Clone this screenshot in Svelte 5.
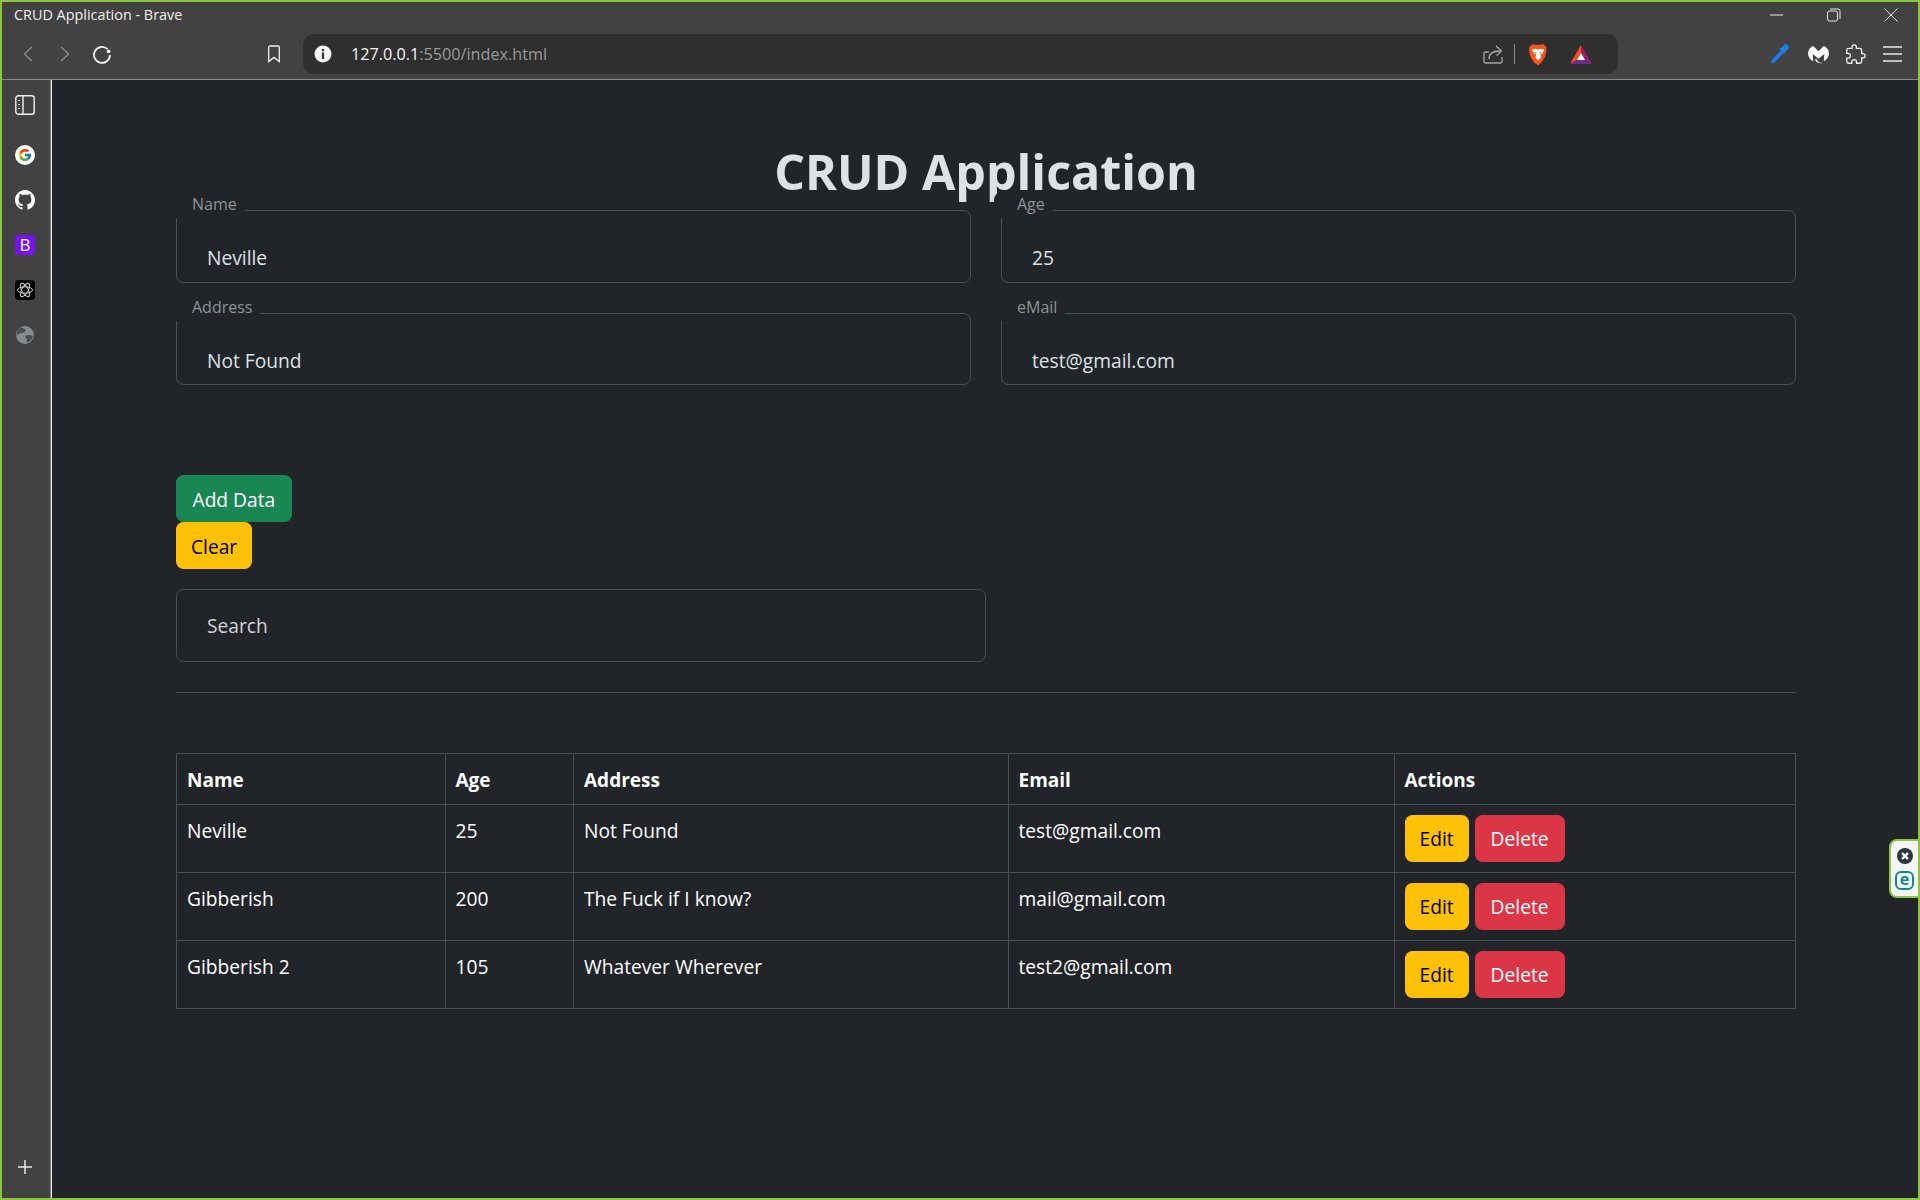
<script>
  let form = $state({ name: 'Neville', age: '25', address: 'Not Found', email: 'test@gmail.com' });
  let search = $state('');
  let rows = $state([
    { name: 'Neville', age: '25', address: 'Not Found', email: 'test@gmail.com' },
    { name: 'Gibberish', age: '200', address: 'The Fuck if I know?', email: 'mail@gmail.com' },
    { name: 'Gibberish 2', age: '105', address: 'Whatever Wherever', email: 'test2@gmail.com' }
  ]);

  function addRow() {
    rows.push({ ...form });
  }

  function clearForm() {
    form = { name: '', age: '', address: '', email: '' };
  }

  function removeRow(index) {
    rows.splice(index, 1);
  }
</script>

<div class="window">
  <header class="titlebar">
    <span class="title">CRUD Application - Brave</span>
    <div class="win-controls">
      <svg viewBox="0 0 14 14" width="14" height="14"><path d="M0 7h13" stroke="#e8e8e8" fill="none" /></svg>
      <svg viewBox="0 0 14 14" width="14" height="14" fill="none" stroke="#e8e8e8"><rect x="0.5" y="3" width="10" height="10" rx="2" /><path d="M3 1h8a2 2 0 0 1 2 2v8" /></svg>
      <svg viewBox="0 0 14 14" width="14" height="14"><path d="M0.5 0.5l13 13M13.5 0.5l-13 13" stroke="#e8e8e8" fill="none" /></svg>
    </div>
  </header>

  <nav class="toolbar">
    <button class="tool" aria-label="Back">
      <svg viewBox="0 0 10 16" width="10" height="16"><path d="M9 1L1.5 8 9 15" stroke="#8b8b8b" stroke-width="1.4" fill="none" /></svg>
    </button>
    <button class="tool" aria-label="Forward">
      <svg viewBox="0 0 10 16" width="10" height="16"><path d="M1 1l7.5 7L1 15" stroke="#8b8b8b" stroke-width="1.4" fill="none" /></svg>
    </button>
    <button class="tool" aria-label="Reload">
      <svg viewBox="0 0 20 20" width="20" height="20"><path d="M15.6 5.2A8 8 0 1 0 18 11" stroke="#f2f2f2" stroke-width="1.8" fill="none" /><circle cx="16.6" cy="7.4" r="1.9" fill="#f2f2f2" /></svg>
    </button>
    <button class="tool bookmark" aria-label="Bookmark">
      <svg viewBox="0 0 14 18" width="14" height="18"><path d="M1.7 16.6V2.4a1.4 1.4 0 0 1 1.4-1.4h7.8a1.4 1.4 0 0 1 1.4 1.4v14.2L7 12.4z" stroke="#f0f0f0" stroke-width="1.3" fill="none" /></svg>
    </button>

    <div class="address">
      <svg class="info" viewBox="0 0 18 18" width="18" height="18"><circle cx="9" cy="9" r="8.5" fill="#f5f5f5" /><path d="M7.9 4h2.2v2.2H7.9zM7.9 7.6h2.2V14H7.9z" fill="#333" /></svg>
      <span class="url"><b>127.0.0.1</b>:5500/index.html</span>
      <svg class="share" viewBox="0 0 20 19" width="20" height="19" fill="none" stroke="#a8a8a8" stroke-width="1.3"><path d="M6 7H2.5A1.5 1.5 0 0 0 1 8.500V16.500A1.500 1.500 0 0 0 2.500 18H17.500A1.500 1.500 0 0 0 19 16.500V12" /><path d="M6 14c0-5 3-8 11-8" /><path d="M13 1l5.500 5-5 4.500" /></svg>
      <span class="sep"></span>
      <svg class="brave" viewBox="0 0 20 23" width="20" height="23"><path d="M5 1l2 .8h6l2-.8 3.500 3.300-.5 1.200.6 1.700-1.400 6.300-3.700 6L10 22.500 6 19.500l-3.700-6L.9 7.200l.6-1.700-.5-1.200z" fill="#f7541e" /><path d="M4 6.500l3.500-.8L10 6.500l2.500-.8 3.500.8-1.500 4-2.200 1 .7 3L10 17.500l-2.500-3 .7-3-2.200-1z" fill="#fff" /><path d="M6.500 8.800l2.500.8-1.800.8zM13.500 8.800l-2.500.8 1.800.8z" fill="#f7541e" /></svg>
      <svg class="bat" viewBox="0 0 22 19" width="22" height="19"><path d="M11 0L0 19l7-4 4-7z" fill="#ff4a1f" /><path d="M11 0l11 19-7-4-4-7z" fill="#9c1f66" /><path d="M0 19h22l-7-4H7z" fill="#662d91" /><path d="M11 8l-4 7h8z" fill="#fff" /></svg>
    </div>

    <button class="tool dropper" aria-label="Color picker">
      <svg viewBox="0 0 20 20" width="20" height="20"><path d="M1 19.500l1-4L11 6.500l2.500 2.500L4.500 18.500z" fill="#1a7fe6" /><path d="M9 4.500l2-.4 3-3.200a2.200 2.200 0 0 1 3.200 0l1 1a2.200 2.200 0 0 1 0 3.200l-3.200 3-.4 2z" fill="#1a7fe6" /></svg>
    </button>
    <button class="tool malware" aria-label="Malwarebytes">
      <svg viewBox="0 0 20 18" width="21" height="19" fill="#f6f6f6"><path d="M5 .8C2 2 0 5 0 8c0 3 2 6 5 7.500L4.500 8.500 10 13l5.500-4.500-.5 7C18 14 20 11 20 8c0-3-2-6-5-7.200L10 6z" /><path d="M6.500 14c1.500 3 5.500 4 7.500 3-3 0-5-1-6-4z" /></svg>
    </button>
    <button class="tool" aria-label="Extensions">
      <svg viewBox="0 0 24 24" width="21" height="21"><path d="M20.500 11H19V7c0-1.100-.9-2-2-2h-4V3.500C13 2.120 11.880 1 10.500 1S8 2.120 8 3.500V5H4c-1.100 0-1.990.9-1.990 2v3.800H3.500c1.490 0 2.700 1.210 2.700 2.700s-1.210 2.700-2.700 2.700H2V20c0 1.100.9 2 2 2h3.800v-1.500c0-1.490 1.210-2.700 2.700-2.700 1.490 0 2.700 1.210 2.700 2.700V22H17c1.100 0 2-.9 2-2v-4h1.500c1.380 0 2.500-1.120 2.500-2.500S21.880 11 20.500 11z" stroke="#ececec" stroke-width="1.500" fill="none" /></svg>
    </button>
    <button class="tool" aria-label="Menu">
      <svg viewBox="0 0 19 16" width="19" height="16"><path d="M0 1h19M0 8h19M0 15h19" stroke="#e8e8e8" stroke-width="1.400" /></svg>
    </button>
  </nav>

  <div class="content">
    <aside class="sidebar">
      <svg class="panel-icon" viewBox="0 0 20 20" width="20" height="20" fill="none" stroke="#efefef" stroke-width="1.400"><rect x="0.800" y="0.800" width="18.400" height="18.400" rx="2.500" /><path d="M8 1v18" /><path d="M4 5v1M4 9v1M4 13v1" stroke-width="1.600" /></svg>
      <svg viewBox="0 0 20 20" width="20" height="20">
        <circle cx="10" cy="10" r="10" fill="#fff" />
        <g transform="translate(2.800 2.800) scale(0.3)">
          <path fill="#FFC107" d="M43.611,20.083H42V20H24v8h11.303c-1.649,4.657-6.08,8-11.303,8c-6.627,0-12-5.373-12-12c0-6.627,5.373-12,12-12c3.059,0,5.842,1.154,7.961,3.039l5.657-5.657C34.046,6.053,29.268,4,24,4C12.955,4,4,12.955,4,24c0,11.045,8.955,20,20,20c11.045,0,20-8.955,20-20C44,22.659,43.862,21.35,43.611,20.083z" />
          <path fill="#FF3D00" d="M6.306,14.691l6.571,4.819C14.655,15.108,18.961,12,24,12c3.059,0,5.842,1.154,7.961,3.039l5.657-5.657C34.046,6.053,29.268,4,24,4C16.318,4,9.656,8.337,6.306,14.691z" />
          <path fill="#4CAF50" d="M24,44c5.166,0,9.86-1.977,13.409-5.192l-6.19-5.238C29.211,35.091,26.715,36,24,36c-5.202,0-9.619-3.317-11.283-7.946l-6.522,5.025C9.505,39.556,16.227,44,24,44z" />
          <path fill="#1976D2" d="M43.611,20.083H42V20H24v8h11.303c-0.792,2.237-2.231,4.166-4.087,5.571c0.001-0.001,0.002-0.001,0.003-0.002l6.19,5.238C36.971,39.205,44,34,44,24C44,22.659,43.862,21.35,43.611,20.083z" />
        </g>
      </svg>
      <svg viewBox="0 0 16 16" width="20" height="20"><path fill="#fff" d="M8 0C3.580 0 0 3.580 0 8c0 3.540 2.290 6.530 5.470 7.590.4.070.55-.17.55-.38 0-.19-.01-.82-.01-1.490-2.010.37-2.530-.49-2.690-.94-.09-.23-.48-.94-.82-1.130-.28-.15-.68-.52-.01-.53.63-.01 1.080.58 1.230.82.72 1.210 1.870.87 2.330.66.070-.52.28-.87.51-1.070-1.780-.2-3.640-.89-3.640-3.950 0-.87.31-1.590.82-2.150-.08-.2-.36-1.020.08-2.120 0 0 .67-.21 2.200.82.64-.18 1.320-.27 2-.27.68 0 1.360.09 2 .27 1.530-1.040 2.200-.82 2.200-.82.44 1.100.16 1.920.08 2.120.51.56.82 1.270.82 2.150 0 3.070-1.870 3.750-3.650 3.950.29.25.54.73.54 1.480 0 1.070-.01 1.930-.01 2.200 0 .21.15.46.55.38A8.013 8.013 0 0016 8c0-4.420-3.580-8-8-8z" /></svg>
      <span class="bs-icon">B</span>
      <svg viewBox="0 0 20 20" width="20" height="20">
        <rect width="20" height="20" rx="4" fill="#000" />
        <g fill="none" stroke="#dcdcdc" stroke-width="0.900">
          <ellipse cx="10" cy="10" rx="7.500" ry="3.200" />
          <ellipse cx="10" cy="10" rx="7.500" ry="3.200" transform="rotate(60 10 10)" />
          <ellipse cx="10" cy="10" rx="7.500" ry="3.200" transform="rotate(120 10 10)" />
        </g>
      </svg>
      <svg viewBox="0 0 20 20" width="20" height="20">
        <circle cx="10" cy="10" r="9" fill="#858a8e" />
        <path d="M6 2.500c2 1 3.500 1 4.500 2.500S8 8 6.500 8 2.500 9 2 11C1 8 2.500 4 6 2.500zM11 10.500c2-1 5-.5 7 .5-.5 3-3 6-6 6.500-1-1 .5-2.500-.5-4s-1.500-2-.5-3z" fill="#4a4d50" />
      </svg>
      <svg class="plus" viewBox="0 0 14 14" width="14" height="14"><path d="M7 0v14M0 7h14" stroke="#e6e6e6" stroke-width="1.500" /></svg>
    </aside>

    <main class="page">
      <h1>CRUD Application</h1>

      <div class="fields">
        <div class="field">
          <input id="name" bind:value={form.name} />
          <label for="name">Name</label>
        </div>
        <div class="field">
          <input id="age" bind:value={form.age} />
          <label for="age">Age</label>
        </div>
        <div class="field">
          <input id="address" bind:value={form.address} />
          <label for="address">Address</label>
        </div>
        <div class="field">
          <input id="email" bind:value={form.email} />
          <label for="email">eMail</label>
        </div>
      </div>

      <div class="form-actions">
        <button class="btn green" onclick={addRow}>Add Data</button>
        <button class="btn yellow" onclick={clearForm}>Clear</button>
      </div>

      <div class="search">
        <input bind:value={search} placeholder="Search" />
      </div>

      <hr />

      <table>
        <colgroup>
          <col class="c-name" />
          <col class="c-age" />
          <col class="c-address" />
          <col class="c-email" />
          <col />
        </colgroup>
        <thead>
          <tr>
            <th>Name</th>
            <th>Age</th>
            <th>Address</th>
            <th>Email</th>
            <th>Actions</th>
          </tr>
        </thead>
        <tbody>
          {#each rows as row, i}
            <tr>
              <td>{row.name}</td>
              <td>{row.age}</td>
              <td>{row.address}</td>
              <td>{row.email}</td>
              <td>
                <div class="row-actions">
                  <button class="btn yellow">Edit</button>
                  <button class="btn red" onclick={() => removeRow(i)}>Delete</button>
                </div>
              </td>
            </tr>
          {/each}
        </tbody>
      </table>
    </main>
  </div>

  <div class="eset">
    <svg viewBox="0 0 16 16" width="16" height="16"><circle cx="8" cy="8" r="8" fill="#2c3640" /><path d="M5 5l6 6M11 5l-6 6" stroke="#fff" stroke-width="2.400" /></svg>
    <span class="eset-e">e</span>
  </div>
</div>

<style>
  :global(body) {
    background: #212529;
  }

  .window {
    position: relative;
    display: flex;
    flex-direction: column;
    box-sizing: border-box;
    width: 1920px;
    height: 1200px;
    overflow: hidden;
    border: 2px solid #8cc63e;
    background: #424242;
    color: #dee2e6;
    font-family: 'Open Sans', 'Noto Sans', sans-serif;
  }

  .titlebar {
    display: flex;
    flex: none;
    align-items: center;
    justify-content: space-between;
    box-sizing: border-box;
    height: 28px;
    padding: 0 20px 3px 12px;
    color: #f0f0f0;
    font-size: 14.4px;
  }

  .win-controls {
    display: flex;
    gap: 43px;
  }

  .toolbar {
    display: flex;
    flex: none;
    align-items: center;
    gap: 1px;
    box-sizing: border-box;
    height: 50px;
    padding: 0 0 1px 8px;
    border-bottom: 1px solid #8a8a8a;
  }

  .tool {
    display: flex;
    align-items: center;
    justify-content: center;
    width: 36px;
    height: 36px;
    padding: 0;
    border: 0;
    background: none;
  }

  .bookmark {
    margin-left: 135px;
  }

  .dropper {
    margin-left: 143px;
  }

  .malware {
    margin-left: 1px;
  }

  .address {
    display: flex;
    flex: none;
    align-items: center;
    box-sizing: border-box;
    width: 1315px;
    height: 40px;
    margin-left: 10px;
    padding: 0 26px 0 11px;
    border-radius: 11px;
    background: #2f2f2f;
  }

  .url {
    flex: 1;
    margin-left: 19px;
    color: #9a9a9a;
    font-size: 16.2px;
  }

  .url b {
    color: #f5f5f5;
    font-weight: 400;
  }

  .sep {
    width: 1px;
    height: 20px;
    margin: 0 13px 0 11px;
    background: #8a8a8a;
  }

  .bat {
    margin-left: 22px;
  }

  .content {
    display: flex;
    flex: 1;
    min-height: 0;
  }

  .sidebar {
    display: flex;
    flex: none;
    flex-direction: column;
    align-items: center;
    gap: 25px;
    box-sizing: border-box;
    width: 49px;
    padding: 15px 2px 24px 0;
    border-right: 1px solid #7d7d7d;
  }

  .panel-icon {
    margin-bottom: 5px;
  }

  .bs-icon {
    display: block;
    width: 20px;
    height: 20px;
    border-radius: 3px;
    background: #7611f0;
    color: #fff;
    font-size: 17px;
    line-height: 20px;
    text-align: center;
  }

  .plus {
    margin-top: auto;
  }

  .page {
    flex: 1;
    box-sizing: border-box;
    padding: 0 122px 0 124px;
    border-left: 1px solid #efefef;
    background: #212529;
  }

  h1 {
    margin: 61px 0 9px;
    color: #dee2e6;
    font-size: 48.4px;
    font-weight: 700;
    line-height: 60px;
    text-align: center;
  }

  .fields {
    display: grid;
    grid-template-columns: 795px 795px;
    gap: 30px;
  }

  .field,
  .search {
    position: relative;
    box-sizing: border-box;
    height: 72.5px;
    border: 1px solid #495057;
    border-radius: 7.5px;
  }

  .search {
    width: 810px;
    margin-top: 20px;
  }

  input {
    display: block;
    box-sizing: border-box;
    width: 100%;
    height: 100%;
    padding: 31px 30px 8px;
    border: 0;
    outline: 0;
    background: transparent;
    color: #dee2e6;
    font: inherit;
    font-size: 19.2px;
    line-height: 30px;
  }

  .search input {
    padding: 0 30px;
  }

  input::placeholder {
    color: #cfd3d6;
    opacity: 1;
  }

  label {
    position: absolute;
    top: -19px;
    left: -8px;
    padding: 0 8px 2px 23px;
    border-top-left-radius: 8px;
    background: #212529;
    color: #8f9396;
    font-size: 16px;
    line-height: 24px;
  }

  .form-actions {
    display: flex;
    flex-direction: column;
    align-items: flex-start;
    margin-top: 90px;
  }

  .btn {
    box-sizing: border-box;
    height: 47px;
    padding: 2px 15px 0;
    border: 0;
    border-radius: 7.5px;
    font: inherit;
    font-size: 19.2px;
    line-height: 30px;
  }

  .green {
    padding-right: 16.5px;
    padding-left: 16.5px;
    background: #198754;
    color: #fff;
  }

  .yellow {
    background: #ffc107;
    color: #000;
  }

  .red {
    padding-right: 16px;
    padding-left: 16px;
    background: #dc3545;
    color: #fff;
  }

  hr {
    height: 1px;
    margin: 30px 0 60px;
    border: 0;
    background: #495057;
  }

  table {
    width: 1620px;
    border-collapse: collapse;
    table-layout: fixed;
    color: #fff;
    font-size: 19.2px;
    line-height: 30px;
  }

  .c-name {
    width: 268.5px;
  }

  .c-age {
    width: 128.5px;
  }

  .c-address {
    width: 434.5px;
  }

  .c-email {
    width: 386px;
  }

  th,
  td {
    padding: 10px;
    border: 1px solid #495057;
    text-align: left;
    vertical-align: top;
  }

  th {
    padding-top: 11px;
    padding-bottom: 9px;
    font-size: 19px;
  }

  td {
    padding-top: 11px;
    padding-bottom: 9px;
  }

  td:last-child {
    padding-top: 10px;
    padding-bottom: 10px;
  }

  .row-actions {
    display: flex;
    gap: 6px;
  }

  .eset {
    position: absolute;
    top: 837px;
    right: 0;
    display: flex;
    flex-direction: column;
    align-items: center;
    gap: 7px;
    box-sizing: border-box;
    width: 29px;
    height: 59px;
    padding: 7px 0 0;
    border: 2px solid #8cc63e;
    border-right: 0;
    border-radius: 8px 0 0 8px;
    background: #f4f4f4;
  }

  .eset-e {
    display: block;
    box-sizing: border-box;
    width: 19px;
    height: 19px;
    border: 2px solid #0e8a96;
    border-radius: 6px;
    color: #0e8a96;
    font-size: 16px;
    font-weight: 700;
    line-height: 13px;
    text-align: center;
  }
</style>
